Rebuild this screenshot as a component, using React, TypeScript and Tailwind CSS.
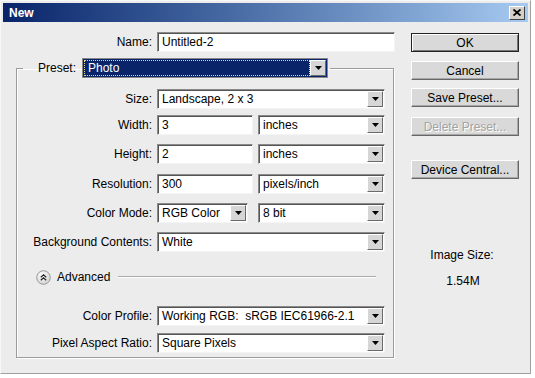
import React from 'react';

const sunken =
  'border border-t-[#8a8a8a] border-l-[#8a8a8a] border-r-[#f4f4f4] border-b-[#f4f4f4] shadow-[inset_1px_1px_0_#555]';

const Arrow: React.FC = () => (
  <div className="w-[16px] h-full bg-[#d6d6d6] border border-t-white border-l-white border-r-[#6a6a6a] border-b-[#6a6a6a] flex items-center justify-center">
    <svg width="7" height="4" viewBox="0 0 7 4">
      <path d="M0 0h7L3.5 4z" fill="#000" />
    </svg>
  </div>
);

const Input: React.FC<{ value: string; w: string }> = ({ value, w }) => (
  <div className={`${w} h-[20px] bg-white ${sunken} flex items-center pl-[4px]`}>{value}</div>
);

const Select: React.FC<{ value: string; w: string }> = ({ value, w }) => (
  <div className={`${w} h-[20px] bg-white ${sunken} flex items-stretch p-[1px]`}>
    <span className="flex-1 flex items-center pl-[3px] whitespace-pre">{value}</span>
    <Arrow />
  </div>
);

const Row: React.FC<{ label: string; mt: string; children: React.ReactNode }> = ({ label, mt, children }) => (
  <div className={`flex items-center ${mt}`}>
    <div className="w-[135px] text-right">{label}</div>
    <div className="ml-[5px] flex gap-[5px]">{children}</div>
  </div>
);

const Button: React.FC<{ label: string; mt: string; def?: boolean; disabled?: boolean }> = ({ label, mt, def, disabled }) => (
  <div
    className={`${mt} h-[19px] flex items-center justify-center bg-[#d9d9d9] border ${
      def ? 'border-[#222] shadow-[inset_1px_1px_0_#fff,inset_-1px_-1px_0_#777]' : 'border-t-white border-l-white border-r-[#666] border-b-[#666] shadow-[inset_-1px_-1px_0_#a8a8a8]'
    } ${disabled ? 'text-[#a3a3a3] [text-shadow:1px_1px_0_#fff]' : 'text-black'}`}
  >
    {label}
  </div>
);

const App: React.FC = () => {
  return (
    <div className="w-[535px] h-[378px] bg-white text-[12px] text-black" style={{ fontFamily: '"Liberation Sans", Arial, sans-serif' }}>
      <div className="w-[531px] h-[374px] bg-[#ececec] border border-r-[#a0a0a0] border-b-[#a0a0a0] border-t-[#f8f8f8] border-l-[#f8f8f8] flex flex-col">
        {/* title bar */}
        <div className="mx-[2px] mt-[2px] h-[19px] bg-gradient-to-r from-[#0a246a] to-[#a6caf0] flex items-center justify-between pl-[6px] pr-[3px]">
          <span className="text-white font-bold text-[12px]">New</span>
          <div className="w-[16px] h-[14px] bg-[#d4d0c8] border border-t-white border-l-white border-r-[#404040] border-b-[#404040] flex items-center justify-center">
            <svg width="8" height="7" viewBox="0 0 8 7">
              <path d="M0.5 0.5l7 6M7.5 0.5l-7 6" stroke="#000" strokeWidth="1.8" />
            </svg>
          </div>
        </div>

        <div className="flex">
          {/* left: form */}
          <div className="w-[396px]">
            <div className="flex items-center mt-[10px]">
              <div className="w-[151px] text-right">Name:</div>
              <div className="ml-[5px]">
                <Input value="Untitled-2" w="w-[238px]" />
              </div>
            </div>

            <fieldset className="ml-[15px] w-[378px] mt-[6px] border border-[#9c9c9c] shadow-[1px_1px_0_#fff,inset_1px_1px_0_#fff] pb-[4px]">
              <legend className="ml-[6px] px-[2px] flex items-center">
                <span className="ml-[13px]">Preset:</span>
                <div className="ml-[6px] w-[246px] h-[20px] bg-[#0a246a] border border-[#888] flex items-stretch p-[1px]">
                  <span className="flex-1 flex items-center pl-[3px] text-white border border-dotted border-[#e8d890]">Photo</span>
                  <Arrow />
                </div>
              </legend>

              <Row label="Size:" mt="mt-[11px]">
                <Select value="Landscape, 2 x 3" w="w-[228px]" />
              </Row>
              <Row label="Width:" mt="mt-[6px]">
                <Input value="3" w="w-[96px]" />
                <Select value="inches" w="w-[127px]" />
              </Row>
              <Row label="Height:" mt="mt-[9px]">
                <Input value="2" w="w-[96px]" />
                <Select value="inches" w="w-[127px]" />
              </Row>
              <Row label="Resolution:" mt="mt-[10px]">
                <Input value="300" w="w-[96px]" />
                <Select value="pixels/inch" w="w-[127px]" />
              </Row>
              <Row label="Color Mode:" mt="mt-[9px]">
                <div className="w-[96px]">
                  <Select value="RGB Color" w="w-[91px]" />
                </div>
                <Select value="8 bit" w="w-[127px]" />
              </Row>
              <Row label="Background Contents:" mt="mt-[9px]">
                <Select value="White" w="w-[228px]" />
              </Row>

              <div className="flex items-center mt-[17px] h-[16px] pl-[19px]">
                <svg width="15" height="15" viewBox="0 0 15 15">
                  <defs>
                    <radialGradient id="adv" cx="40%" cy="35%" r="70%">
                      <stop offset="0" stopColor="#ffffff" />
                      <stop offset="1" stopColor="#d0d0d0" />
                    </radialGradient>
                  </defs>
                  <circle cx="7.5" cy="7.5" r="6.8" fill="url(#adv)" stroke="#9a9a9a" />
                  <path d="M4.8 7.2l2.7-2.5 2.7 2.5M4.8 10.2l2.7-2.5 2.7 2.5" fill="none" stroke="#222" strokeWidth="1.2" />
                </svg>
                <span className="ml-[6px]">Advanced</span>
                <div className="ml-[8px] w-[258px] h-[2px] border-t border-[#a8a8a8] border-b border-b-white" />
              </div>

              <Row label="Color Profile:" mt="mt-[21px]">
                <Select value="Working RGB:  sRGB IEC61966-2.1" w="w-[228px]" />
              </Row>
              <Row label="Pixel Aspect Ratio:" mt="mt-[7px]">
                <Select value="Square Pixels" w="w-[228px]" />
              </Row>
            </fieldset>
          </div>

          {/* right: buttons */}
          <div className="ml-[14px] w-[108px] flex flex-col">
            <Button label="OK" mt="mt-[11px]" def />
            <Button label="Cancel" mt="mt-[9px]" />
            <Button label="Save Preset..." mt="mt-[8px]" />
            <Button label="Delete Preset..." mt="mt-[10px]" disabled />
            <Button label="Device Central..." mt="mt-[24px]" />
            <div className="mt-[67px] text-center pr-[6px]">Image Size:</div>
            <div className="mt-[8px] text-center pr-[4px]">1.54M</div>
          </div>
        </div>
      </div>
    </div>
  );
};

export default App;
